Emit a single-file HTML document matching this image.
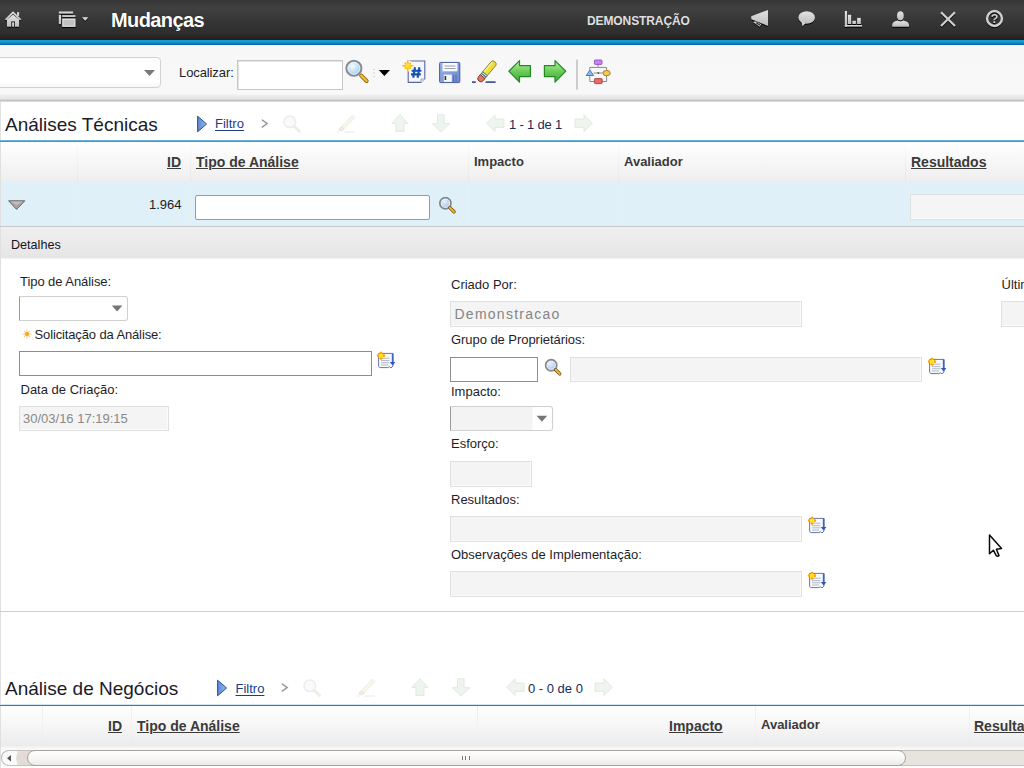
<!DOCTYPE html>
<html><head><meta charset="utf-8">
<style>
*{margin:0;padding:0;box-sizing:border-box}
html,body{width:1024px;height:768px;overflow:hidden;background:#fff;font-family:"Liberation Sans",sans-serif;position:relative}
.a{position:absolute}
.t{position:absolute;white-space:nowrap;line-height:1}
svg{position:absolute;overflow:visible}
#hdr{left:0;top:0;width:1024px;height:40px;background:linear-gradient(#353535 0px,#414141 8px,#383838 18px,#2e2e2e 33px,#2a2725 36px,#221e1c 40px)}
#blue{left:0;top:40px;width:1024px;height:5px;background:linear-gradient(#1ca2da,#1692c9 45%,#0a6aab 90%,#2a7ab0)}
#tb{left:0;top:45px;width:1024px;height:57px;background:linear-gradient(#fdfdf6 0,#f7f7f7 1.5px,#f8f8f8 49px,#efefef 50px,#ececec 51px,#e6e6e6 54px,#c6c6c6 55px,#c2c2c2 56.2px,#f0f0f0 56.8px,#fff 57px)}
.lbl{font-size:13px;color:#1e1e28}
.hd{font-weight:bold;color:#3a3a3a;font-size:13px}
.hdu{font-weight:bold;color:#3a3a3a;font-size:14px;text-decoration:underline}
.inp{position:absolute;background:#fff;border:1px solid #8d8d8d}
.ro{position:absolute;background:#f4f4f4;border:1px solid #e0e0e0;box-shadow:inset -1px -1px 0 #fbfbfb}
</style></head><body>
<div id="hdr" class="a"></div>
<div id="blue" class="a"></div>
<div id="tb" class="a"></div>

<!-- header text -->
<div class="t" style="left:111px;top:10.2px;font-size:20px;font-weight:bold;color:#fff;letter-spacing:-0.6px;text-shadow:0 0 1px #111">Mudanças</div>
<div class="t" style="left:587px;top:14.5px;font-size:12px;font-weight:bold;color:#dedede;letter-spacing:-0.1px">DEMONSTRAÇÃO</div>


<!-- header icons -->
<svg style="left:0;top:0;filter:drop-shadow(0 1px 0.5px #000)" width="1024" height="40">
 <defs><linearGradient id="hg" x1="0" y1="0" x2="0" y2="1"><stop offset="0" stop-color="#e2e2e2"/><stop offset="1" stop-color="#bdbdbd"/></linearGradient></defs>
 <g fill="url(#hg)">
  <!-- home -->
  <path d="M4.8 19.2 L13 11.2 L21.4 19.2 L20 20.4 L13 13.8 L6.2 20.4Z"/>
  <rect x="17" y="12.2" width="2.2" height="4"/>
  <path d="M7 26.8 V19.4 L13 14.6 L19 19.4 V26.8 H15 V21.4 H11.2 V26.8Z"/>
  <rect x="12.1" y="22.4" width="2" height="4.4"/>
  <!-- windows menu -->
  <rect x="58.8" y="11.5" width="14.3" height="2.2"/>
  <rect x="58.8" y="14.8" width="2.2" height="9.4"/>
  <rect x="62.2" y="15.2" width="13.3" height="1.9"/>
  <rect x="62.2" y="18.5" width="13.3" height="8.4" fill="#e6e6e6"/>
  <rect x="63.4" y="19.7" width="10.9" height="6" fill="#c2c2c2"/>
  <path d="M82 17.2 H88.4 L85.2 21Z"/>
  <!-- megaphone -->
  <path d="M751.2 16.3 L768 9.9 V25.9 L751.2 19.3Z"/>
  <path d="M753 21.9 L755.6 21.1 L761.4 23.9 L759.6 26.8Z"/><path d="M752.6 20.5 L761.8 24" stroke="#1c1c1c" stroke-width="0.7"/><path d="M756.3 23.1 L759.9 24.9" stroke="#262626" stroke-width="1.1"/>
  <!-- chat -->
  <ellipse cx="806.7" cy="17.5" rx="8.3" ry="6.2"/>
  <path d="M801.5 21.5 L805.5 23.2 L802.4 26.5Z"/>
  <!-- chart -->
  <rect x="844.8" y="11" width="2.2" height="15.7"/>
  <rect x="844.8" y="25" width="17.2" height="1.7"/>
  <rect x="847.9" y="14.8" width="3.3" height="9.2"/>
  <rect x="852.4" y="20.8" width="3.5" height="3.2"/>
  <rect x="857.1" y="17.9" width="3.7" height="6.1"/>
  <!-- person -->
  <ellipse cx="900.4" cy="15.8" rx="3.4" ry="4.6"/>
  <path d="M892.2 26.7 V24.5 Q892.6 21.8 897.5 20.6 L900.4 21.5 L903.3 20.6 Q908.6 21.8 909 24.5 V26.7Z"/>
 </g>
 <g stroke="#cfcfcf" fill="none">
  <path d="M941 12.3 L955 26 M955 12.3 L941 26" stroke-width="2.3"/>
  <circle cx="994.5" cy="18.5" r="7.4" stroke-width="2.5"/>
 </g>
 <text x="994.6" y="22.8" font-family="Liberation Sans" font-weight="bold" font-size="12.5" fill="#cfcfcf" text-anchor="middle">?</text>
</svg>

<!-- toolbar -->
<div class="a" style="left:-10px;top:57px;width:171px;height:31px;background:linear-gradient(#fafafa,#fff 20%,#fff 80%,#f8f8f8);border:1px solid #d2d2d2;border-radius:4px"></div>
<svg style="left:144px;top:70px" width="12" height="6"><path d="M0 0H11L5.5 6Z" fill="#7a7a7a"/></svg>
<div class="t lbl" style="left:179px;top:66px;letter-spacing:-0.1px">Localizar:</div>
<div class="a" style="left:237px;top:60px;width:106px;height:30px;background:#fff;border:1px solid #c6c6c6;box-shadow:inset 1px 1px 0 #e4e4e4"></div>


<svg style="left:0;top:0" width="1024" height="100">
 <defs>
  <radialGradient id="lens" cx="0.4" cy="0.35" r="0.7"><stop offset="0" stop-color="#f4fbff"/><stop offset="0.5" stop-color="#c8e2f6"/><stop offset="1" stop-color="#98c4ea"/></radialGradient>
  <linearGradient id="grn" x1="0" y1="0" x2="0" y2="1"><stop offset="0" stop-color="#b8f0a4"/><stop offset="0.5" stop-color="#6ccc58"/><stop offset="1" stop-color="#3aa83a"/></linearGradient>
  <linearGradient id="flop" x1="0" y1="0" x2="1" y2="1"><stop offset="0" stop-color="#9ab4ea"/><stop offset="1" stop-color="#6a88cc"/></linearGradient>
 </defs>
 <!-- magnifier -->
 <circle cx="353.9" cy="68.3" r="7.5" fill="url(#lens)" stroke="#878b90" stroke-width="2.1"/>
 <circle cx="353.9" cy="68.3" r="6" fill="none" stroke="#e8f4fc" stroke-width="0.8"/>
 <path d="M361.2 75.6 L366.6 81" stroke="#8a5a10" stroke-width="4" stroke-linecap="round"/>
 <path d="M361.2 75.6 L366.6 81" stroke="#f2c42a" stroke-width="2.4" stroke-linecap="round"/>
 <!-- dots + black caret -->
 <rect x="373.5" y="69" width="1" height="1" fill="#b0b0b0"/>
 <rect x="373.5" y="72.5" width="1" height="1" fill="#b0b0b0"/>
 <rect x="373.5" y="76" width="1" height="1" fill="#b0b0b0"/>
 <path d="M378.8 70.1 H390 L384.4 76Z" fill="#000"/>
 <!-- new doc -->
 <path d="M408.2 61 H424.8 V78.8 L421 82.4 H408.2Z" fill="#f4f6fc" stroke="#5a64a0" stroke-width="1.1"/>
 <path d="M425 79 L421 79 L421 83" fill="#dfe6f4" stroke="#8a94c0" stroke-width="0.8"/>
 <g stroke="#1452b0" stroke-width="2.1" fill="none">
  <path d="M415 67.2 L413.2 77.8 M419.4 67.2 L417.6 77.8 M411.6 70.8 H421.4 M411 74.4 H420.8"/>
 </g>
 <circle cx="407.8" cy="65.8" r="5.6" fill="#f8f8f4"/>
 <path d="M407.80 59.20 L408.91 63.12 L411.26 62.34 L410.48 64.69 L414.40 65.80 L410.48 66.91 L411.26 69.26 L408.91 68.48 L407.80 72.40 L406.69 68.48 L404.34 69.26 L405.12 66.91 L401.20 65.80 L405.12 64.69 L404.34 62.34 L406.69 63.12Z" fill="#ffae00"/>
 <circle cx="407.8" cy="65.8" r="2.8" fill="#ffe030"/>
 <!-- floppy -->
 <rect x="439.6" y="62.4" width="20.2" height="20.2" rx="1" fill="url(#flop)" stroke="#4a5c9c" stroke-width="1"/>
 <rect x="442.5" y="63" width="14.9" height="8.3" fill="#fafbff"/>
 <rect x="444.5" y="65.5" width="11" height="1" fill="#9aa0b0"/>
 <rect x="444.5" y="68" width="11" height="1" fill="#9aa0b0"/>
 <rect x="443.8" y="74.6" width="8" height="7.3" fill="#f6f6f6"/>
 <rect x="444.6" y="76" width="1.6" height="4" fill="#333"/>
 <rect x="453" y="74.6" width="1" height="7.3" fill="#5670b0"/>
 <rect x="455.5" y="74.6" width="1" height="7.3" fill="#5670b0"/>
 <!-- eraser -->
 <path d="M472 82.2 H475.8 M485.6 82.2 H495.6" stroke="#46569a" stroke-width="1.7"/>
 <g transform="translate(479.8 80) rotate(-50.3)">
  <path d="M8 -3 H21.5 Q23.6 -3 23.6 0 Q23.6 3 21.5 3 H8Z" fill="#eede3a" stroke="#8a7a30" stroke-width="0.9"/>
  <path d="M9 -1.8 H21.5" stroke="#fbf4a0" stroke-width="1.2"/>
  <path d="M4.2 -3 H8.2 V3 H4.2Z" fill="#c8f0ee" stroke="#3a6a6a" stroke-width="0.8"/>
  <path d="M6.2 -3 V3" stroke="#2a5a60" stroke-width="1"/>
  <path d="M4.4 -3.1 H1.8 Q-1.4 -3.1 -1.4 0 Q-1.4 3.1 1.8 3.1 H4.4Z" fill="#e07868" stroke="#8a3028" stroke-width="0.9"/>
 </g>
 <!-- green arrows -->
 <path d="M508.8 71.2 L519.5 60.6 V65.6 H530.4 V76.6 H519.5 V82.2Z" fill="url(#grn)" stroke="#238a23" stroke-width="1.2" stroke-linejoin="round"/>
 <path d="M565.8 71.2 L555 60.6 V65.6 H544.4 V76.6 H555 V82.2Z" fill="url(#grn)" stroke="#238a23" stroke-width="1.2" stroke-linejoin="round"/>
 <!-- separator -->
 <rect x="576.4" y="59.6" width="1.2" height="30" fill="#b0b0b0"/>
 <!-- workflow -->
 <path d="M598 64 V67.4 M589.8 70 V67.4 H606.6 V81.5 H602 M589.8 75.5 V81.5 H594.2 M593.8 73 H602.7" stroke="#8a8a8a" stroke-width="1" fill="none"/>
 <rect x="594.4" y="60" width="7.6" height="4.4" rx="0.8" fill="#c884f4" stroke="#8a50b8" stroke-width="0.9"/>
 <path d="M586.2 75.5 L589.9 70 L593.7 75.5Z" fill="#8ab8f0" stroke="#4a70b0" stroke-width="0.9" stroke-linejoin="round"/>
 <ellipse cx="606.6" cy="73.1" rx="3.7" ry="2.7" fill="#f4c850" stroke="#a07820" stroke-width="0.9"/>
 <circle cx="598.3" cy="73" r="0.9" fill="#555"/>
 <rect x="594.4" y="78.6" width="7.8" height="5" rx="0.8" fill="#e86a6a" stroke="#a84040" stroke-width="0.9"/>
</svg>

<!-- section 1 -->
<div class="a" style="left:0;top:102px;width:1px;height:666px;background:#e0e0e0"></div>
<div class="t" style="left:5px;top:115px;font-size:19px;color:#1a1a28">Análises Técnicas</div>
<div class="t" style="left:215px;top:117px;font-size:13px;color:#1a3d86;text-decoration:underline;text-underline-offset:1.5px">Filtro</div>
<div class="t" style="left:509px;top:118px;font-size:13px;color:#1a2a5a;letter-spacing:-0.2px">1 - 1 de 1</div>
<div class="a" style="left:0;top:140px;width:1024px;height:1px;background:#66b4d9"></div><div class="a" style="left:0;top:141px;width:1024px;height:1px;background:#3a9bc8"></div>
<div class="a" style="left:1px;top:142px;width:1023px;height:40px;background:linear-gradient(#fff,#eeeeee)"></div>
<div class="a" style="left:1px;top:182px;width:1023px;height:44px;background:#dff0f8"></div>
<div class="a" style="left:0;top:226px;width:1024px;height:1px;background:#c9c9c9"></div>
<div class="a" style="left:1px;top:227px;width:1023px;height:30px;background:linear-gradient(#efefef,#e6e6e6)"></div><div class="a" style="left:1px;top:257px;width:1023px;height:1px;background:#dde7ee"></div><div class="a" style="left:1px;top:258px;width:1023px;height:1px;background:#f2f6f8"></div>

<div class="a" style="left:77px;top:142px;width:1px;height:40px;background:linear-gradient(#fbfbfb,#e6e6e6)"></div><div class="a" style="left:77px;top:182px;width:1px;height:44px;background:#e4f2f8"></div><div class="a" style="left:190px;top:142px;width:1px;height:40px;background:linear-gradient(#fbfbfb,#e6e6e6)"></div><div class="a" style="left:190px;top:182px;width:1px;height:44px;background:#e4f2f8"></div><div class="a" style="left:468px;top:142px;width:1px;height:40px;background:linear-gradient(#fbfbfb,#e6e6e6)"></div><div class="a" style="left:468px;top:182px;width:1px;height:44px;background:#e4f2f8"></div><div class="a" style="left:618px;top:142px;width:1px;height:40px;background:linear-gradient(#fbfbfb,#e6e6e6)"></div><div class="a" style="left:618px;top:182px;width:1px;height:44px;background:#e4f2f8"></div><div class="a" style="left:905px;top:142px;width:1px;height:40px;background:linear-gradient(#fbfbfb,#e6e6e6)"></div><div class="a" style="left:905px;top:182px;width:1px;height:44px;background:#e4f2f8"></div>
<div class="t hdu" style="left:167px;top:155px">ID</div>
<div class="t hdu" style="left:196px;top:155px">Tipo de Análise</div>
<div class="t hd" style="left:474px;top:155px">Impacto</div>
<div class="t hd" style="left:624px;top:155px">Avaliador</div>
<div class="t hdu" style="left:911px;top:155px">Resultados</div>

<div class="t lbl" style="left:149px;top:198px;color:#222">1.964</div>
<div class="inp" style="left:195px;top:195px;width:235px;height:25px;border-radius:2px;border-color:#9a9a9a"></div>
<div class="ro" style="left:910px;top:194px;width:120px;height:26px;background:#f5f5f5"></div>
<div class="t" style="left:11px;top:239px;font-size:12.6px;color:#141420">Detalhes</div>

<!-- details -->
<div class="t lbl" style="left:20px;top:274.5px;letter-spacing:-0.06px">Tipo de Análise:</div>
<div class="a" style="left:19px;top:296px;width:109px;height:25px;background:#fff;border:1px solid #d0d0d0;border-left-color:#9a9a9a;border-radius:0 3px 3px 0"></div>
<div class="t lbl" style="left:34.5px;top:327.5px;letter-spacing:-0.13px">Solicitação da Análise:</div>
<div class="inp" style="left:19px;top:351px;width:353px;height:25px"></div>
<div class="t lbl" style="left:20.5px;top:382.5px">Data de Criação:</div>
<div class="ro" style="left:19px;top:406px;width:150px;height:25px"></div>
<div class="t" style="left:23px;top:412px;font-size:13px;color:#888">30/03/16 17:19:15</div>

<div class="t lbl" style="left:451px;top:278px">Criado Por:</div>
<div class="ro" style="left:450px;top:301px;width:352px;height:26px"></div>
<div class="t" style="left:454.5px;top:307px;font-size:14px;color:#858585;letter-spacing:1.25px">Demonstracao</div>
<div class="t lbl" style="left:451px;top:333px;letter-spacing:-0.05px">Grupo de Proprietários:</div>
<div class="inp" style="left:450px;top:357px;width:88px;height:25px"></div>
<div class="ro" style="left:570px;top:357px;width:352px;height:25px"></div>
<div class="t lbl" style="left:451px;top:385px">Impacto:</div>
<div class="a" style="left:450px;top:406px;width:103px;height:25px;background:linear-gradient(90deg,#f3f3f3 81px,#fff 82px);border:1px solid #d0d0d0;border-left-color:#9a9a9a;border-radius:0 3px 3px 0"></div>
<div class="t lbl" style="left:451px;top:437px">Esforço:</div>
<div class="ro" style="left:450px;top:461px;width:82px;height:26px"></div>
<div class="t lbl" style="left:451px;top:493px">Resultados:</div>
<div class="ro" style="left:450px;top:516px;width:352px;height:26px"></div>
<div class="t lbl" style="left:451px;top:548px">Observações de Implementação:</div>
<div class="ro" style="left:450px;top:571px;width:352px;height:26px"></div>
<div class="t lbl" style="left:1001.5px;top:278px">Últim</div>
<div class="ro" style="left:1001px;top:301px;width:40px;height:26px"></div>
<div class="a" style="left:0;top:611px;width:1024px;height:1px;background:#cfcfcf"></div>

<!-- section 2 -->
<div class="t" style="left:5px;top:679px;font-size:19px;color:#1a1a28">Análise de Negócios</div>
<div class="t" style="left:235.5px;top:682px;font-size:13px;color:#1a3d86;text-decoration:underline;text-underline-offset:1.5px">Filtro</div>
<div class="t" style="left:528px;top:682px;font-size:13px;color:#1a2a5a;letter-spacing:0px">0 - 0 de 0</div>
<div class="a" style="left:0;top:704px;width:1024px;height:1px;background:#cfe6f0"></div><div class="a" style="left:0;top:705px;width:1024px;height:1px;background:#1683c2"></div>
<div class="a" style="left:1px;top:706px;width:1023px;height:44px;background:linear-gradient(#fff 0,#ececec 40px,#f4f4f6 41px,#fafafc 44px)"></div>
<div class="a" style="left:42px;top:706px;width:1px;height:40px;background:linear-gradient(#f0f0f0,rgba(230,230,230,0.3))"></div><div class="a" style="left:131px;top:706px;width:1px;height:40px;background:linear-gradient(#f0f0f0,rgba(230,230,230,0.3))"></div><div class="a" style="left:755px;top:706px;width:1px;height:40px;background:linear-gradient(#f0f0f0,rgba(230,230,230,0.3))"></div><div class="a" style="left:969px;top:706px;width:1px;height:40px;background:linear-gradient(#f0f0f0,rgba(230,230,230,0.3))"></div>
<div class="a" style="left:477px;top:706px;width:1px;height:30px;background:linear-gradient(#e8e8e8,rgba(230,230,230,0))"></div>
<div class="t hdu" style="left:108px;top:719px">ID</div>
<div class="t hdu" style="left:137px;top:719px">Tipo de Análise</div>
<div class="t hdu" style="left:669px;top:719px">Impacto</div>
<div class="t hd" style="left:761px;top:718px">Avaliador</div>
<div class="t hdu" style="left:974px;top:719px">Resultados</div>


<svg style="left:0;top:0" width="1024" height="768">
 <defs>
  <linearGradient id="btri" x1="0" y1="0" x2="1" y2="0"><stop offset="0" stop-color="#5a88d0"/><stop offset="1" stop-color="#9ab8e8"/></linearGradient>
  <radialGradient id="lens2" cx="0.4" cy="0.35" r="0.7"><stop offset="0" stop-color="#e8f2fc"/><stop offset="0.6" stop-color="#bcd2f2"/><stop offset="1" stop-color="#a0bce8"/></radialGradient>
  
  
  
 </defs>
 <g>
   <path d="M197.6 116.2 L206.6 124 L197.6 131.8Z" fill="url(#btri)" stroke="#2a4e98" stroke-width="1" stroke-linejoin="round"/>
   <path d="M261.8 119.8 L267.2 123.6 L261.8 127.4" fill="none" stroke="#959595" stroke-width="1.4"/>
   <circle cx="289.8" cy="121.8" r="5.8" fill="#f8fafc" stroke="#ebeced" stroke-width="1.5"/>
   <path d="M294.2 126.2 L299.6 131.4" stroke="#f0ece2" stroke-width="2.8" stroke-linecap="round"/>
   <path d="M352.5 115 L355 117.5 L344 129 L341.5 126.5Z" fill="#f8f6e8" stroke="#ecebe0" stroke-width="0.8"/>
   <path d="M341.5 126.5 L344 129 Q341 132 339.5 130.5 Q338 129 341.5 126.5Z" fill="#f6eaea" stroke="#ead8d8" stroke-width="0.8"/>
   <path d="M337 132 H339 M344 132 H355" stroke="#e4e8f0" stroke-width="1"/>
   <path d="M400 114.6 L407.8 123.4 H404 V131.4 H395.9 V123.4 H391.8Z" fill="#eef5ee" stroke="#dde9dd" stroke-width="0.9" stroke-linejoin="round"/>
   <path d="M440.8 131.9 L450 123.7 H444.1 V114.8 H437.5 V123.7 H432.3Z" fill="#eef5ee" stroke="#dde9dd" stroke-width="0.9" stroke-linejoin="round"/>
   <path d="M486.6 123.2 L495 114.8 V119 H504 V127.4 H495 V131.6Z" fill="#eef5ee" stroke="#dde9dd" stroke-width="0.9" stroke-linejoin="round"/>
   <path d="M592.4 123.2 L584 114.8 V119 H575 V127.4 H584 V131.6Z" fill="#eef5ee" stroke="#dde9dd" stroke-width="0.9" stroke-linejoin="round"/>
 </g>
 <g transform="translate(20 564)">
   <path d="M197.6 116.2 L206.6 124 L197.6 131.8Z" fill="url(#btri)" stroke="#2a4e98" stroke-width="1" stroke-linejoin="round"/>
   <path d="M261.8 119.8 L267.2 123.6 L261.8 127.4" fill="none" stroke="#959595" stroke-width="1.4"/>
   <circle cx="289.8" cy="121.8" r="5.8" fill="#f8fafc" stroke="#ebeced" stroke-width="1.5"/>
   <path d="M294.2 126.2 L299.6 131.4" stroke="#f0ece2" stroke-width="2.8" stroke-linecap="round"/>
   <path d="M352.5 115 L355 117.5 L344 129 L341.5 126.5Z" fill="#f8f6e8" stroke="#ecebe0" stroke-width="0.8"/>
   <path d="M341.5 126.5 L344 129 Q341 132 339.5 130.5 Q338 129 341.5 126.5Z" fill="#f6eaea" stroke="#ead8d8" stroke-width="0.8"/>
   <path d="M337 132 H339 M344 132 H355" stroke="#e4e8f0" stroke-width="1"/>
   <path d="M400 114.6 L407.8 123.4 H404 V131.4 H395.9 V123.4 H391.8Z" fill="#eef5ee" stroke="#dde9dd" stroke-width="0.9" stroke-linejoin="round"/>
   <path d="M440.8 131.9 L450 123.7 H444.1 V114.8 H437.5 V123.7 H432.3Z" fill="#eef5ee" stroke="#dde9dd" stroke-width="0.9" stroke-linejoin="round"/>
   <path d="M486.6 123.2 L495 114.8 V119 H504 V127.4 H495 V131.6Z" fill="#eef5ee" stroke="#dde9dd" stroke-width="0.9" stroke-linejoin="round"/>
   <path d="M592.4 123.2 L584 114.8 V119 H575 V127.4 H584 V131.6Z" fill="#eef5ee" stroke="#dde9dd" stroke-width="0.9" stroke-linejoin="round"/>
 </g>
 <g transform="translate(445.4 203.2)">
   <circle cx="0" cy="0" r="5.5" fill="url(#lens2)" stroke="#85898e" stroke-width="1.9"/>
   <circle cx="0" cy="0" r="4.1" fill="none" stroke="#f0f6fc" stroke-width="0.9"/>
   <path d="M4.4 4.4 L8.6 8.6" stroke="#7a4a10" stroke-width="3.4" stroke-linecap="round"/>
   <path d="M4.4 4.4 L8.6 8.6" stroke="#f2c232" stroke-width="1.9" stroke-linecap="round"/>
 </g>
 <g transform="translate(551.2 365.3)">
   <circle cx="0" cy="0" r="5.5" fill="url(#lens2)" stroke="#85898e" stroke-width="1.9"/>
   <circle cx="0" cy="0" r="4.1" fill="none" stroke="#f0f6fc" stroke-width="0.9"/>
   <path d="M4.4 4.4 L8.6 8.6" stroke="#7a4a10" stroke-width="3.4" stroke-linecap="round"/>
   <path d="M4.4 4.4 L8.6 8.6" stroke="#f2c232" stroke-width="1.9" stroke-linecap="round"/>
 </g>
 <g>
   <path d="M378.6 353.4 H393 V366 L391 368 L389.6 366.8 L387.8 367.6 H380 L378.6 366.4Z" fill="#f8f9fc" stroke="#6a76aa" stroke-width="1" stroke-linejoin="round"/>
   <path d="M381 358.2 H389.5 M381 360.6 H389.5 M381 362.8 H389.5 M381 365 H388" stroke="#a8b0c4" stroke-width="0.9"/>
   <path d="M392.6 353.6 V364" stroke="#3a66c8" stroke-width="1.6"/>
   <path d="M389.8 362 H395.4 L392.6 365.6Z" fill="#2c58c0"/>
   <circle cx="381" cy="352.9" r="1.5" fill="#ffa400"/><circle cx="381" cy="358.3" r="1.5" fill="#ffa400"/><circle cx="378.3" cy="355.6" r="1.5" fill="#ffa400"/><circle cx="383.7" cy="355.6" r="1.5" fill="#ffa400"/>
   <circle cx="381" cy="355.6" r="2.2" fill="#ffe020"/>
 </g>
 <g transform="translate(551 6)">
   <path d="M378.6 353.4 H393 V366 L391 368 L389.6 366.8 L387.8 367.6 H380 L378.6 366.4Z" fill="#f8f9fc" stroke="#6a76aa" stroke-width="1" stroke-linejoin="round"/>
   <path d="M381 358.2 H389.5 M381 360.6 H389.5 M381 362.8 H389.5 M381 365 H388" stroke="#a8b0c4" stroke-width="0.9"/>
   <path d="M392.6 353.6 V364" stroke="#3a66c8" stroke-width="1.6"/>
   <path d="M389.8 362 H395.4 L392.6 365.6Z" fill="#2c58c0"/>
   <circle cx="381" cy="352.9" r="1.5" fill="#ffa400"/><circle cx="381" cy="358.3" r="1.5" fill="#ffa400"/><circle cx="378.3" cy="355.6" r="1.5" fill="#ffa400"/><circle cx="383.7" cy="355.6" r="1.5" fill="#ffa400"/>
   <circle cx="381" cy="355.6" r="2.2" fill="#ffe020"/>
 </g>
 <g transform="translate(431 165)">
   <path d="M378.6 353.4 H393 V366 L391 368 L389.6 366.8 L387.8 367.6 H380 L378.6 366.4Z" fill="#f8f9fc" stroke="#6a76aa" stroke-width="1" stroke-linejoin="round"/>
   <path d="M381 358.2 H389.5 M381 360.6 H389.5 M381 362.8 H389.5 M381 365 H388" stroke="#a8b0c4" stroke-width="0.9"/>
   <path d="M392.6 353.6 V364" stroke="#3a66c8" stroke-width="1.6"/>
   <path d="M389.8 362 H395.4 L392.6 365.6Z" fill="#2c58c0"/>
   <circle cx="381" cy="352.9" r="1.5" fill="#ffa400"/><circle cx="381" cy="358.3" r="1.5" fill="#ffa400"/><circle cx="378.3" cy="355.6" r="1.5" fill="#ffa400"/><circle cx="383.7" cy="355.6" r="1.5" fill="#ffa400"/>
   <circle cx="381" cy="355.6" r="2.2" fill="#ffe020"/>
 </g>
 <g transform="translate(431 220)">
   <path d="M378.6 353.4 H393 V366 L391 368 L389.6 366.8 L387.8 367.6 H380 L378.6 366.4Z" fill="#f8f9fc" stroke="#6a76aa" stroke-width="1" stroke-linejoin="round"/>
   <path d="M381 358.2 H389.5 M381 360.6 H389.5 M381 362.8 H389.5 M381 365 H388" stroke="#a8b0c4" stroke-width="0.9"/>
   <path d="M392.6 353.6 V364" stroke="#3a66c8" stroke-width="1.6"/>
   <path d="M389.8 362 H395.4 L392.6 365.6Z" fill="#2c58c0"/>
   <circle cx="381" cy="352.9" r="1.5" fill="#ffa400"/><circle cx="381" cy="358.3" r="1.5" fill="#ffa400"/><circle cx="378.3" cy="355.6" r="1.5" fill="#ffa400"/><circle cx="383.7" cy="355.6" r="1.5" fill="#ffa400"/>
   <circle cx="381" cy="355.6" r="2.2" fill="#ffe020"/>
 </g>
 <!-- row triangle -->
 <path d="M8.6 200.8 H24.8 L16.6 209.4Z" fill="#aaa4a4" stroke="#6a6464" stroke-width="1" stroke-linejoin="round"/>
 <path d="M10.6 201.6 H22.6 L16.6 205Z" fill="#c4bebe"/>
 <!-- dropdown arrows -->
 <path d="M111.8 305.6 H122.4 L117.1 311.6Z" fill="#767676"/>
 <path d="M536.6 415.8 H547.2 L541.9 421.8Z" fill="#767676"/>
 <!-- required star -->
 <g stroke="#f9cd80" stroke-width="1.1"><path d="M27 329.6 V338.4 M22.6 334 H31.4 M23.9 330.9 L30.1 337.1 M30.1 330.9 L23.9 337.1"/></g><circle cx="27" cy="334" r="2.1" fill="#f2aa2a"/>
 <!-- cursor -->
 <path d="M989.5 535 V553.8 L993.4 550.2 L996.2 555.6 Q997.6 556.8 999 555.6 L996.4 549.2 L1001.6 548.4Z" fill="#fff" stroke="#0a0a0a" stroke-width="1.5" stroke-linejoin="round"/>
</svg>

<!-- scrollbar -->
<div class="a" style="left:1px;top:750px;width:1040px;height:16px;background:#e7e3de;border:1px solid #c6c0ba;border-radius:8px"></div>
<div class="a" style="left:1px;top:750px;width:16px;height:16px;background:#fbfbfb;border:1px solid #c6c0ba;border-right:none;border-radius:8px 0 0 8px"></div>
<div class="a" style="left:16px;top:751px;width:22px;height:14px;background:#e2dbd8;border-radius:7px 0 0 7px"></div>
<svg style="left:0;top:0" width="40" height="768"><path d="M7 758.2 L11 755 V761.4Z" fill="#555"/></svg>
<div class="a" style="left:27px;top:750px;width:879px;height:16px;background:linear-gradient(#fefefe,#f6f5f4 60%,#edebe9);border:1px solid #a9a39d;border-radius:8px"></div>
<div class="a" style="left:462px;top:756px;width:1px;height:4px;background:#7a7a7a"></div>
<div class="a" style="left:465px;top:756px;width:1px;height:4px;background:#7a7a7a"></div>
<div class="a" style="left:469px;top:756px;width:1px;height:4px;background:#7a7a7a"></div>
</body></html>
